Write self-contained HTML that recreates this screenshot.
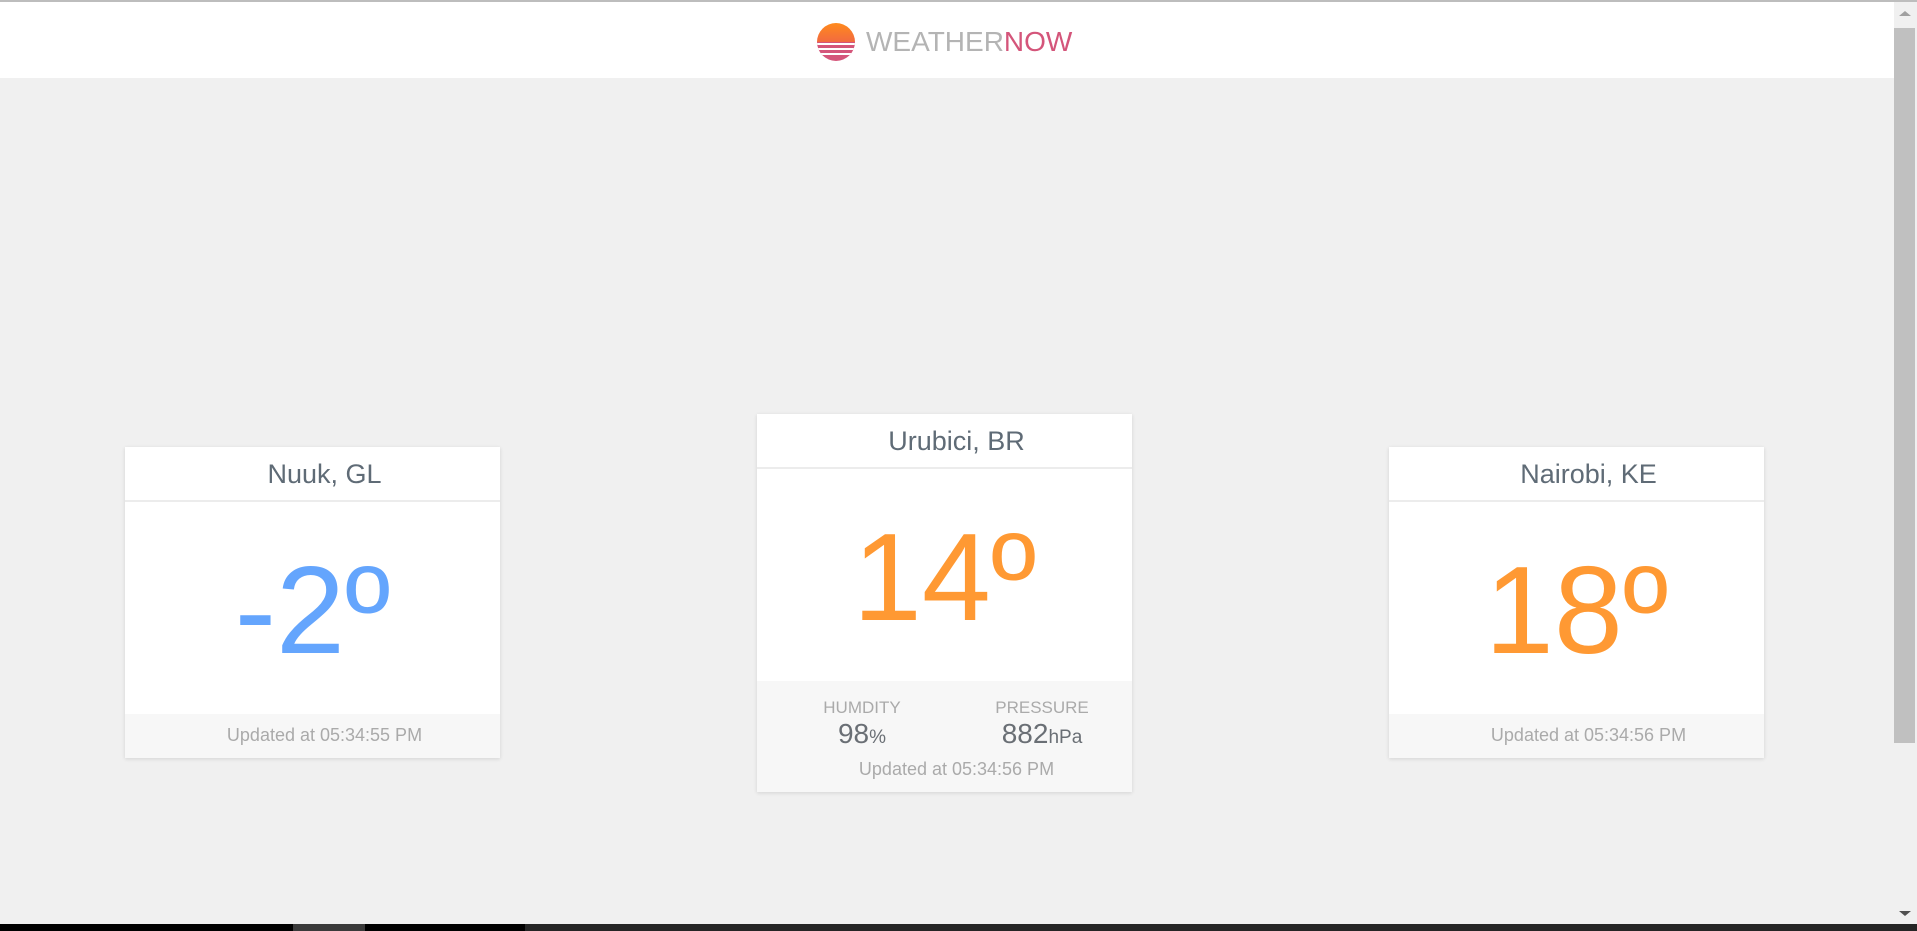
<!DOCTYPE html>
<html><head><meta charset="utf-8"><style>
*{margin:0;padding:0;box-sizing:border-box}
html,body{width:1917px;height:931px;overflow:hidden;background:#f0f0f0;font-family:"Liberation Sans",Arial,sans-serif}
.topline{position:absolute;left:0;top:0;width:1917px;height:2px;background:#bdbdbd}
.header{position:absolute;left:0;top:2px;width:1894px;height:76px;background:#fff}
.logo{position:absolute;left:817px;top:21px;width:38px;height:38px;border-radius:50%;overflow:hidden;background:linear-gradient(#ff8a1c,#f26a40 50%,#d4557a 50%)}
.logo i{position:absolute;left:0;width:38px;height:2px;background:#fff}
.brand{position:absolute;left:866px;top:24px;font-size:28px;color:#b4b4b4}
.brand span{color:#d4557a}
.card{position:absolute;background:#fff;box-shadow:0 1px 4px rgba(0,0,0,.12)}
.card .h{height:55px;border-bottom:2px solid #ececec;text-align:center;font-size:27px;color:#5f6b76;line-height:54px;padding-left:24px}
.card .t{text-align:center;font-size:124px;line-height:1}
.card .f{position:absolute;left:0;right:0;bottom:0;background:#f7f7f7;text-align:center;color:#aaa;font-size:18px}
.scroll{position:absolute;left:1894px;top:2px;width:23px;height:922px;background:#f0f0f0}
.thumb{position:absolute;left:1894px;top:28px;width:21px;height:715px;background:#c0c0c0}
.bar{position:absolute;left:0;top:924px;width:1917px;height:7px;background:#252525}
</style></head><body>
<div class="topline"></div>
<div class="header">
<div class="logo"><i style="top:20px"></i><i style="top:25px"></i><i style="top:30px"></i></div>
<div class="brand">WEATHER<span>NOW</span></div>
</div>

<div class="card" style="left:125px;top:447px;width:375px;height:311px">
<div class="h">Nuuk, GL</div>
<div class="t" style="color:#64a5fd;padding-top:47px">-2º</div>
<div class="f" style="height:44px;line-height:42px;padding-left:24px">Updated at 05:34:55 PM</div>
</div>

<div class="card" style="left:757px;top:414px;width:375px;height:378px">
<div class="h">Urubici, BR</div>
<div class="t" style="color:#ff9933;padding-top:47px">14º</div>
<div class="f" style="height:111px">
<div style="position:absolute;left:105px;top:17px;width:0"><div style="position:absolute;left:-60px;width:120px;text-align:center;font-size:17px;color:#aaa">HUMDITY</div><div style="position:absolute;left:-60px;top:20px;width:120px;text-align:center;font-size:28px;color:#6a6f75">98<span style="font-size:19px">%</span></div></div>
<div style="position:absolute;left:285px;top:17px;width:0"><div style="position:absolute;left:-60px;width:120px;text-align:center;font-size:17px;color:#aaa">PRESSURE</div><div style="position:absolute;left:-70px;top:20px;width:140px;text-align:center;font-size:28px;color:#6a6f75">882<span style="font-size:19px">hPa</span></div></div>
<div style="position:absolute;left:24px;right:0;top:78px;text-align:center">Updated at 05:34:56 PM</div>
</div>
</div>

<div class="card" style="left:1389px;top:447px;width:375px;height:311px">
<div class="h">Nairobi, KE</div>
<div class="t" style="color:#ff9933;padding-top:47px">18º</div>
<div class="f" style="height:44px;line-height:42px;padding-left:24px">Updated at 05:34:56 PM</div>
</div>

<div class="scroll"></div>
<div class="thumb"></div>
<div style="position:absolute;left:1899px;top:11px;width:0;height:0;border-left:6px solid transparent;border-right:6px solid transparent;border-bottom:5px solid #a0a0a0"></div>
<div style="position:absolute;left:1899px;top:911px;width:0;height:0;border-left:6px solid transparent;border-right:6px solid transparent;border-top:5px solid #505050"></div>
<div class="bar"><div style="position:absolute;left:0;width:293px;height:7px;background:#000"></div><div style="position:absolute;left:293px;width:72px;height:7px;background:#3a3a3a"></div><div style="position:absolute;left:365px;width:160px;height:7px;background:#000"></div></div>
</body></html>
